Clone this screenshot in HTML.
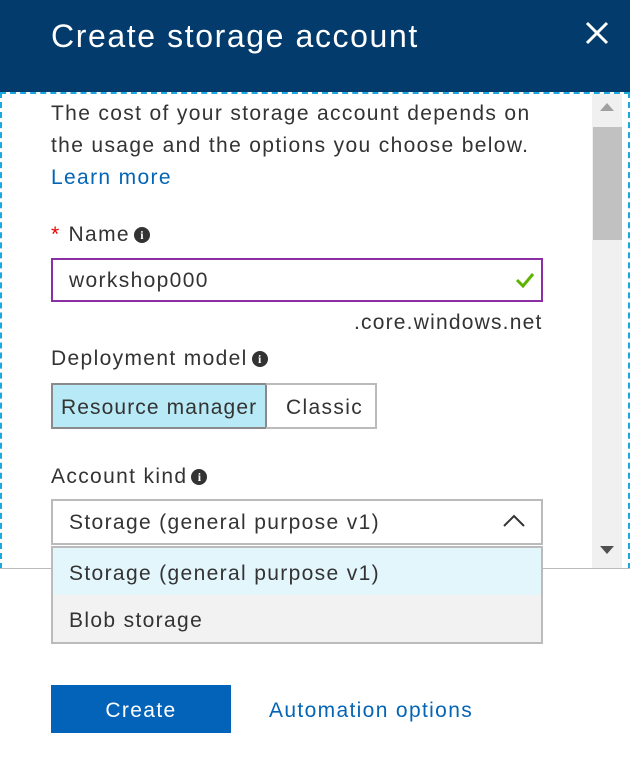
<!DOCTYPE html>
<html><head><style>
*{margin:0;padding:0;box-sizing:border-box}
body{width:630px;height:773px;overflow:hidden;background:#fff;font-family:"Liberation Sans",sans-serif;color:#333;position:relative}
.a{position:absolute;white-space:nowrap}
.hdr{left:0;top:0;width:630px;height:92px;background:#033b6c}
.t{font-size:21px;letter-spacing:1.35px;color:#333}
.i{display:inline-block;width:16px;height:16px;border-radius:50%;background:#333;color:#fff;font-size:12px;font-weight:bold;text-align:center;line-height:16px;font-family:"Liberation Serif",serif;vertical-align:2px;margin-left:4px;letter-spacing:0}
</style></head><body>
<div class="a hdr"></div>
<div class="a" style="left:51px;top:18px;font-size:32px;letter-spacing:1.6px;color:#fff">Create storage account</div>
<svg class="a" style="left:585px;top:21px" width="24" height="24"><path d="M2 2 L22 22 M22 2 L2 22" stroke="#fff" stroke-width="3"/></svg>
<div class="a" style="left:0;top:92px;width:630px;height:477px;border:2px dashed #1aa8e0;border-bottom:none"></div>
<div class="a" style="left:0;top:568px;width:630px;height:1px;background:#bbb"></div>
<div class="a" style="left:592px;top:94px;width:30px;height:474px;background:#f0f0f0"></div>
<div class="a" style="left:593px;top:127px;width:29px;height:113px;background:#c1c1c1"></div>
<div class="a" style="left:600px;top:103px;border:7px solid transparent;border-bottom:8px solid #a0a0a0;border-top:none"></div>
<div class="a" style="left:600px;top:546px;border:7px solid transparent;border-top:8px solid #505050;border-bottom:none"></div>
<div class="a t" style="left:51px;top:98px;line-height:32px">The cost of your storage account depends on<br>the usage and the options you choose below.<br><span style="color:#0465b6">Learn more</span></div>
<div class="a t" style="left:51px;top:223px"><span style="color:#e00;margin-right:8px">*</span>Name<span class="i">i</span></div>
<div class="a" style="left:51px;top:258px;width:492px;height:44px;border:2px solid #8b2fa3"></div>
<div class="a t" style="left:69px;top:269px">workshop000</div>
<svg class="a" style="left:515px;top:272px" width="20" height="16"><path d="M2 8 L8 14 L18 2" fill="none" stroke="#5db300" stroke-width="3"/></svg>
<div class="a t" style="left:354px;top:311px;letter-spacing:1.2px">.core.windows.net</div>
<div class="a t" style="left:51px;top:347px">Deployment model<span class="i">i</span></div>
<div class="a" style="left:51px;top:383px;width:216px;height:46px;background:#b8e9f6;border:2px solid #8a8a8a"></div>
<div class="a t" style="left:61px;top:396px;letter-spacing:1.1px">Resource manager</div>
<div class="a" style="left:266px;top:383px;width:111px;height:46px;border:2px solid #bbb;border-left:none"></div>
<div class="a t" style="left:286px;top:396px">Classic</div>
<div class="a t" style="left:51px;top:465px">Account kind<span class="i">i</span></div>
<div class="a" style="left:51px;top:499px;width:492px;height:46px;border:2px solid #bbb;background:#fff"></div>
<div class="a t" style="left:69px;top:511px">Storage (general purpose v1)</div>
<svg class="a" style="left:502px;top:514px" width="24" height="14"><path d="M2 12 L12 2 L22 12" fill="none" stroke="#333" stroke-width="2"/></svg>
<div class="a" style="left:51px;top:546px;width:492px;height:98px;border:2px solid #bbb;background:#f2f2f2"></div>
<div class="a" style="left:53px;top:548px;width:488px;height:47px;background:#e2f6fc"></div>
<div class="a t" style="left:69px;top:562px">Storage (general purpose v1)</div>
<div class="a t" style="left:69px;top:609px">Blob storage</div>
<div class="a" style="left:51px;top:685px;width:180px;height:48px;background:#0363b8"></div>
<div class="a t" style="left:51px;top:699px;width:180px;text-align:center;color:#fff">Create</div>
<div class="a t" style="left:269px;top:699px;color:#0465b6">Automation options</div>
</body></html>
